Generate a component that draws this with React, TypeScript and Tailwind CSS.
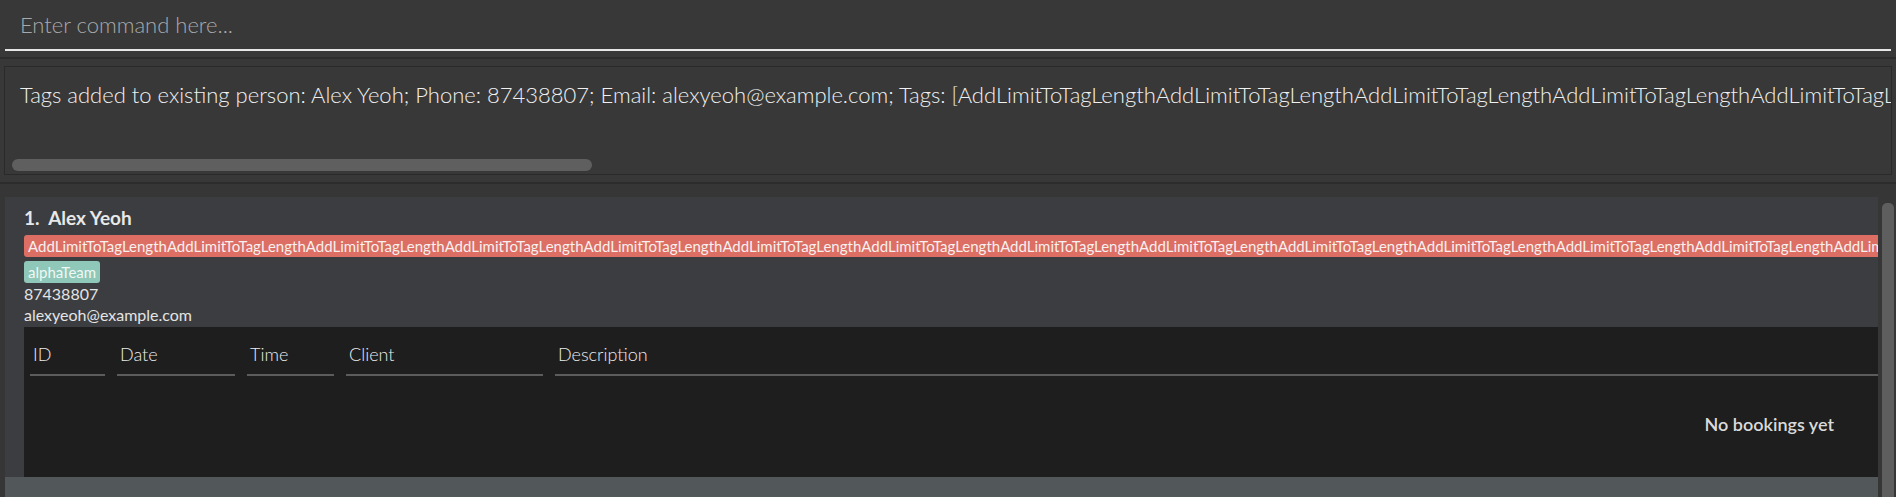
import React from 'react';

const TAG = 'AddLimitToTagLength';

const columns = [
  { label: 'ID', cell: 'w-[87px] px-[6px]' },
  { label: 'Date', cell: 'w-[130px] px-[6px]' },
  { label: 'Time', cell: 'w-[99px] px-[6px]' },
  { label: 'Client', cell: 'w-[209px] px-[6px]' },
  { label: 'Description', cell: 'flex-1 pl-[6px]' },
];

function CommandBox() {
  return (
    <div className="h-[57px] px-[5px]">
      <div className="h-[51px] border-b-2 border-[#e6e6e6] flex items-center pl-[15px]">
        <span className="text-[22px] font-light text-[#a7a9ab]">Enter command here...</span>
      </div>
    </div>
  );
}

function ResultBox() {
  const msg =
    'Tags added to existing person: Alex Yeoh; Phone: 87438807; Email: alexyeoh@example.com; Tags: [' +
    TAG.repeat(8);
  return (
    <div className="h-[109px] mx-[4px] border border-[#2a2a2a] bg-[#383838] flex flex-col overflow-hidden">
      <div className="pl-[15px] pt-[11px] h-[92px] whitespace-nowrap overflow-hidden text-[22px] font-light text-[#f0f0f0]">
        {msg}
      </div>
      <div className="pl-[7px]">
        <div className="w-[580px] h-[12px] rounded-full bg-[#5f5f5f]" />
      </div>
    </div>
  );
}

function PersonCard() {
  return (
    <div className="w-[1873px] h-[286px] bg-[#3c3d40] pl-[19px] pt-[9px] flex flex-col overflow-hidden">
      <div className="text-[19px] font-bold text-[#e8e8e8] leading-[24px]">1.&nbsp; Alex Yeoh</div>
      <div className="mt-[5px] h-[22px] bg-[#dc6e64] rounded-l-[3px] pl-[4px] whitespace-nowrap overflow-hidden text-[15px] leading-[22px] text-[#f6f0ee]">
        {TAG.repeat(14)}
      </div>
      <div className="mt-[4px] flex">
        <div className="h-[22px] px-[4px] rounded-[3px] bg-[#8fc7b8] text-[15px] leading-[22px] text-[#eef8f4]">
          alphaTeam
        </div>
      </div>
      <div className="text-[16px] leading-[21px] text-[#e4e4e4]">87438807</div>
      <div className="text-[16px] leading-[21px] text-[#e4e4e4]">alexyeoh@example.com</div>
      <div className="mt-[2px] h-[150px] bg-[#1e1e1e] flex flex-col">
        <div className="flex pt-[15px]">
          {columns.map((c) => (
            <div key={c.label} className={c.cell}>
              <div className="pl-[3px] pb-[7px] border-b-2 border-[#5c5c5c] text-[18px] font-light leading-[25px] text-[#ececec]">
                {c.label}
              </div>
            </div>
          ))}
        </div>
        <div className="flex-1 flex items-center justify-end pr-[44px] pt-[2px] pb-[6px]">
          <span className="text-[18px] font-semibold text-[#dadada]">No bookings yet</span>
        </div>
      </div>
    </div>
  );
}

export default function App() {
  return (
    <div
      className="w-[1896px] h-[497px] bg-[#383838] overflow-hidden flex flex-col"
      style={{ fontFamily: 'Lato, "Open Sans", sans-serif' }}
    >
      <CommandBox />
      <div className="h-[2px] bg-[#2c2c2c]" />
      <div className="h-[7px]" />
      <ResultBox />
      <div className="h-[7px]" />
      <div className="h-[2px] bg-[#2c2c2c]" />
      <div className="flex-1 flex bg-[#363636] pt-[13px] overflow-hidden">
        <div className="flex flex-col pl-[5px]">
          <PersonCard />
          <div className="w-[1873px] h-[20px] bg-[#52575a]" />
        </div>
        <div className="ml-[4px] pt-[6px]">
          <div className="w-[12px] h-[320px] rounded-[5px] bg-[#5e5e5e]" />
        </div>
      </div>
    </div>
  );
}
